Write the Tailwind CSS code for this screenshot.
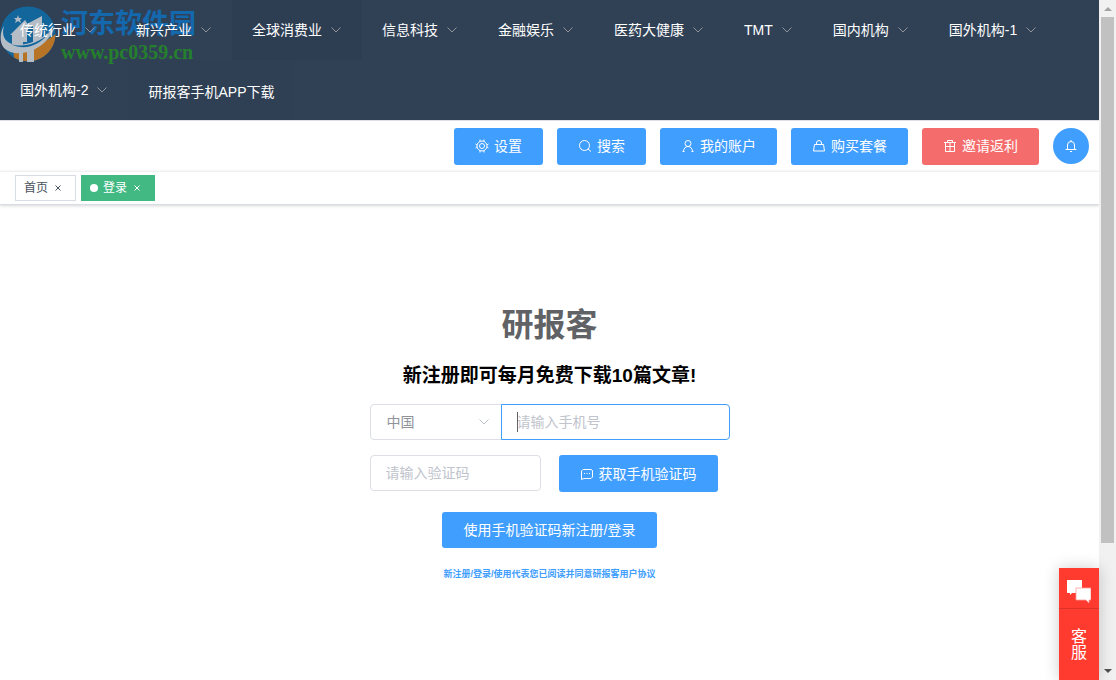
<!DOCTYPE html>
<html lang="zh-CN">
<head>
    <meta charset="UTF-8">
    <meta name="viewport" content="width=device-width, initial-scale=1.0">
    <title>研报客</title>
    <script src="https://cdn.jsdelivr.net/npm/@tailwindcss/browser@4"></script>
</head>
<body class="h-screen overflow-hidden bg-white font-['Liberation_Sans','Noto_Sans_CJK_SC',sans-serif] text-sm text-[#606266]">
    <svg class="hidden">
        <symbol id="chevron" viewBox="0 0 12 12"><path d="M1.5 3.5 6 8l4.500-4.500" fill="none" stroke="currentColor"/></symbol>
        <symbol id="close" viewBox="0 0 8 8"><path d="m1.500 1.500 5 5m0-5-5 5" fill="none" stroke="currentColor"/></symbol>
    </svg>

    <div class="relative flex h-full">
        <div class="min-w-0 flex-1">
            <!-- category menu -->
            <nav class="relative bg-[#304156] text-white">
                <!-- site watermark -->
                <div class="pointer-events-none absolute top-1 left-0 flex items-center gap-px opacity-80">
                    <svg class="size-15" viewBox="0 0 60 60">
                        <circle cx="28" cy="30" r="27.500" fill="#0b70ae"/>
                        <path d="M55.500 30A27.500 27.500 0 0 1 14 53.500L13 44C30 45 47 38 55.500 30Z" fill="#d9811c"/>
                        <path d="M10 31 25 16l2 3v19h-4v20h-4V47l-7-2V31Z" fill="#d5dbe3"/>
                        <path d="M25 21 42 12v27l-8 3v16h-7V42h6V22l-3 2Z" fill="#d5dbe3"/>
                        <path d="M4 22C-3 46 30 48 55 23 46 47 16 56 4 44-1 38 0 28 4 22Z" fill="#d5dbe3"/>
                        <path d="M11 40c12 4 27 0 38-11-10 13-25 18-38 11Z" fill="#0b70ae"/>
                        <path d="m18 11 1 3h3l-2 2 1 3-3-2-3 2 1-3-2-2h3Z" fill="#d5dbe3"/>
                    </svg>
                    <div class="pt-1">
                        <p class="text-[27px] leading-8 font-bold text-[#0d72c4]">河东软件园</p>
                        <p class="font-['Liberation_Serif',serif] text-[20px] leading-6 font-bold text-[#239023]">www.pc0359.cn</p>
                    </div>
                </div>

                <ul class="relative flex flex-wrap">
                    <li><a href="#" class="flex h-15 items-center gap-2 px-5">传统行业<svg class="size-3 text-[#909399]"><use href="#chevron"/></svg></a></li>
                    <li><a href="#" class="flex h-15 items-center gap-2 px-5">新兴产业<svg class="size-3 text-[#909399]"><use href="#chevron"/></svg></a></li>
                    <li><a href="#" class="flex h-15 items-center gap-2 bg-[#2d3d52] px-5">全球消费业<svg class="size-3 text-[#909399]"><use href="#chevron"/></svg></a></li>
                    <li><a href="#" class="flex h-15 items-center gap-2 px-5">信息科技<svg class="size-3 text-[#909399]"><use href="#chevron"/></svg></a></li>
                    <li><a href="#" class="flex h-15 items-center gap-2 px-5">金融娱乐<svg class="size-3 text-[#909399]"><use href="#chevron"/></svg></a></li>
                    <li><a href="#" class="flex h-15 items-center gap-2 px-5">医药大健康<svg class="size-3 text-[#909399]"><use href="#chevron"/></svg></a></li>
                    <li><a href="#" class="flex h-15 items-center gap-2 px-5">TMT<svg class="size-3 text-[#909399]"><use href="#chevron"/></svg></a></li>
                    <li><a href="#" class="flex h-15 items-center gap-2 px-5">国内机构<svg class="size-3 text-[#909399]"><use href="#chevron"/></svg></a></li>
                    <li><a href="#" class="flex h-15 items-center gap-2 px-5">国外机构-1<svg class="size-3 text-[#909399]"><use href="#chevron"/></svg></a></li>
                    <li><a href="#" class="flex h-15 items-center gap-2 px-5">国外机构-2<svg class="size-3 text-[#909399]"><use href="#chevron"/></svg></a></li>
                    <li><a href="#" class="flex h-15 items-center bg-[#2f3f54] px-5 pt-1">研报客手机APP下载</a></li>
                </ul>
            </nav>

            <!-- account toolbar -->
            <header class="flex h-[51px] items-center justify-end gap-3.5 border-t border-[#dcdfe6] pr-2.5 text-white">
                <button class="flex h-[37px] items-center gap-[5px] rounded-[3px] bg-[#409eff] px-[21px]">
                    <svg class="size-3.5" viewBox="0 0 14 14" fill="none" stroke="currentColor"><circle cx="7" cy="7" r="5"/><circle cx="7" cy="7" r="2.500"/><path d="M5 .5v2M9 .5v2M5 11.500v2M9 11.500v2M.5 5 2 6M.5 9 2 8M13.500 5 12 6M13.500 9 12 8"/></svg>设置
                </button>
                <button class="flex h-[37px] items-center gap-[5px] rounded-[3px] bg-[#409eff] px-[21px]">
                    <svg class="size-3.5" viewBox="0 0 14 14" fill="none" stroke="currentColor"><circle cx="6.500" cy="6.500" r="5"/><path d="m10 10 3 2.500"/></svg>搜索
                </button>
                <button class="flex h-[37px] items-center gap-[5px] rounded-[3px] bg-[#409eff] px-[21px]">
                    <svg class="size-3.5" viewBox="0 0 14 14" fill="none" stroke="currentColor"><circle cx="7" cy="4.500" r="3"/><path d="M2.500 12.500C2.500 9.500 4.500 7.500 7 7.500s4.500 2 4.500 5M1.500 12.500h2m7 0h2"/></svg>我的账户
                </button>
                <button class="flex h-[37px] items-center gap-[5px] rounded-[3px] bg-[#409eff] px-[21px]">
                    <svg class="size-3.5" viewBox="0 0 14 14" fill="none" stroke="currentColor"><path d="M2.500 5.500h9l1 6.500h-11ZM4.500 5.500V4a2.500 2.500 0 0 1 5 0v1.500"/></svg>购买套餐
                </button>
                <button class="flex h-[37px] items-center gap-[5px] rounded-[3px] bg-[#f56c6c] px-[21px]">
                    <svg class="size-3.5" viewBox="0 0 14 14" fill="none" stroke="currentColor"><path d="M1 3.500h12M2.500 3.500v9h9v-9M7 3.500v9M2.500 7.500h9M4.500 3.500v-2h5v2"/></svg>邀请返利
                </button>
                <button class="flex size-9 items-center justify-center rounded-full bg-[#409eff]" aria-label="消息">
                    <svg class="size-3.5" viewBox="0 0 14 14" fill="none" stroke="currentColor"><path d="M1.500 10.500h11M3.500 10.500V6a3.500 3.500 0 0 1 7 0v4.500M6 12.500h2M7 1v1.500"/></svg>
                </button>
            </header>

            <!-- open pages -->
            <div class="flex h-[34px] gap-[5px] border-t border-b border-t-[#f0f0f0] border-b-[#d8dce5] pt-[3px] pl-[15px] text-xs shadow-[0_1px_3px_rgba(0,0,0,0.16)]">
                <a href="#" class="flex h-[26px] items-center border border-[#d8dce5] px-2 text-[#495060]">首页<svg class="mr-[5px] ml-1.5 size-2"><use href="#close"/></svg></a>
                <a href="#" class="flex h-[26px] items-center border border-[#42b983] bg-[#42b983] px-2 text-white"><span class="mr-[5px] size-2 rounded-full bg-white"></span>登录<svg class="mr-[5px] ml-1.5 size-2"><use href="#close"/></svg></a>
            </div>

            <!-- sign-in form -->
            <main class="flex flex-col items-center pt-[98px]">
                <h1 class="text-[32px] leading-[44px] font-bold">研报客</h1>
                <h2 class="mt-[15px] text-[19px] leading-7 font-bold text-black">新注册即可每月免费下载10篇文章!</h2>
                <form class="mt-3.5 w-[360px]">
                    <div class="flex">
                        <div class="relative">
                            <select aria-label="国家" class="h-9 w-33 appearance-none rounded-l-[4px] border border-[#dcdfe6] bg-white pl-4 text-[#909399]"><option>中国</option></select>
                            <svg class="pointer-events-none absolute top-3 right-3 size-3 text-[#c0c4cc]"><use href="#chevron"/></svg>
                        </div>
                        <div class="relative -ml-px flex-1">
                            <input type="tel" aria-label="手机号" placeholder="请输入手机号" class="h-9 w-full rounded-r-[4px] border border-[#409eff] bg-white px-[15px] outline-none placeholder:text-[#c0c4cc]">
                            <span class="absolute top-2 left-4 h-5 w-px bg-[#606266]"></span>
                        </div>
                    </div>
                    <div class="mt-[15px] flex gap-[18px]">
                        <input type="text" aria-label="验证码" placeholder="请输入验证码" class="h-9 w-[171px] rounded-[4px] border border-[#dcdfe6] px-[15px] outline-none placeholder:text-[#c0c4cc]">
                        <button type="button" class="flex h-[37px] items-center gap-[5px] rounded-[3px] bg-[#409eff] px-[21px] text-white">
                            <svg class="size-3.5" viewBox="0 0 14 14" fill="none" stroke="currentColor"><path d="M3 2.500h8l1.500 1V10L11 11.500H4l-2.500 1V4Z"/><path d="M4 6.500h1m1.500 0h1m1.500 0h1"/></svg>获取手机验证码
                        </button>
                    </div>
                    <button type="submit" class="mx-auto mt-5 block h-9 rounded-[3px] bg-[#409eff] px-[22px] text-white">使用手机验证码新注册/登录</button>
                </form>
                <a href="#" class="mt-5 text-[9px] leading-3 font-bold text-[#409eff]">新注册/登录/使用代表您已阅读并同意研报客用户协议</a>
            </main>
        </div>

        <!-- page scrollbar -->
        <div class="flex w-[17px] flex-col items-center bg-[#f1f1f1] px-0.5">
            <svg class="h-[17px] w-2 shrink-0" viewBox="0 0 8 17"><path d="m0 11 4-4 4 4Z" fill="#a3a3a3"/></svg>
            <div class="w-full flex-1"><div class="h-[81.5%] bg-[#c1c1c1]"></div></div>
            <svg class="h-[17px] w-2 shrink-0" viewBox="0 0 8 17"><path d="m0 6 4 4 4-4Z" fill="#505050"/></svg>
        </div>

        <!-- customer service -->
        <button class="absolute right-[17px] bottom-0 flex w-10 flex-col bg-[#ff3b30] text-base text-white shadow-[0_0_16px_rgba(0,0,0,0.2)]">
            <span class="flex h-[41px] w-full items-center justify-center border-b border-[#d9332a] pt-2">
                <svg class="size-6" viewBox="0 0 24 24"><path d="M0 0h15v13H5l-2 2v-2H0Z" fill="#fff"/><path d="M9 8h15v12h-2v3l-3-3H9Z" fill="#fff" stroke="#ff9d97" stroke-width=".8"/></svg>
            </span>
            <span class="flex h-[71px] w-full items-center justify-center px-3 leading-4">客<br>服</span>
        </button>
    </div>
</body>
</html>
